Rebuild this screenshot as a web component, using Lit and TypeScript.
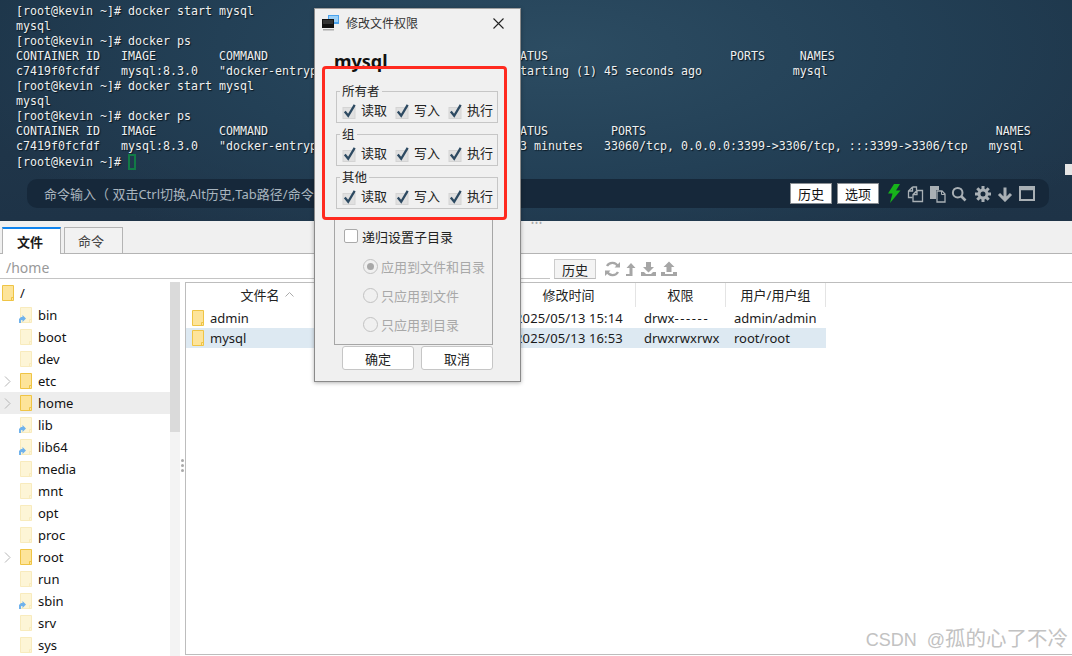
import { LitElement, html, css, svg } from "lit";
import { customElement } from "lit/decorators.js";

type Seg = [number, string];
const row = (segs: Seg[]) => {
  let s = "";
  for (const [col, t] of segs) s = s.padEnd(col, " ") + t;
  return s;
};
const PROMPT = "[root@kevin ~]# ";
const TERM: string[] = [
  PROMPT + "docker start mysql",
  "mysql",
  PROMPT + "docker ps",
  row([[0, "CONTAINER ID"], [15, "IMAGE"], [29, "COMMAND"], [70, "STATUS"], [102, "PORTS"], [112, "NAMES"]]),
  row([[0, "c7419f0fcfdf"], [15, "mysql:8.3.0"], [29, '"docker-entrypoint.s…"'], [69, "Restarting (1) 45 seconds ago"], [111, "mysql"]]),
  PROMPT + "docker start mysql",
  "mysql",
  PROMPT + "docker ps",
  row([[0, "CONTAINER ID"], [15, "IMAGE"], [29, "COMMAND"], [70, "STATUS"], [85, "PORTS"], [140, "NAMES"]]),
  row([[0, "c7419f0fcfdf"], [15, "mysql:8.3.0"], [29, '"docker-entrypoint.s…"'], [69, "Up 3 minutes"], [84, "33060/tcp, 0.0.0.0:3399->3306/tcp, :::3399->3306/tcp"], [139, "mysql"]]),
];

type Node = { n: string; strong?: boolean; link?: boolean; arrow?: boolean; sel?: boolean };
const TREE: Node[] = [
  { n: "bin", link: true },
  { n: "boot" },
  { n: "dev" },
  { n: "etc", strong: true, arrow: true },
  { n: "home", strong: true, arrow: true, sel: true },
  { n: "lib", link: true },
  { n: "lib64", link: true },
  { n: "media" },
  { n: "mnt" },
  { n: "opt" },
  { n: "proc" },
  { n: "root", strong: true, arrow: true },
  { n: "run" },
  { n: "sbin", link: true },
  { n: "srv" },
  { n: "sys" },
];

const folder = (strong: boolean, link = false) => html`<svg class="folder" width="14" height="18" viewBox="0 0 14 18">
  <path d="M1.5 1.5h11v15h-11z" fill="${strong ? "#fde49a" : "#fdf5d6"}" stroke="${strong ? "#efc445" : "#f8ebbd"}"/>
  <path d="M10.5 16.5v-3h2" fill="none" stroke="${strong ? "#efc445" : "#f8ebbd"}"/>
  ${link ? svg`<path d="M0 17v-4l2-2h1.500v-2l3.500 3.500-3.500 3.500v-2h-1l-.5 .5v2.500z" fill="#6fb2ec"/>` : ""}
</svg>`;

const check = html`<svg class="cb" width="14" height="16" viewBox="0 0 14 16">
  <rect x="1" y="3.500" width="12" height="11" fill="#e0e0e0" stroke="#d4d4d4"/>
  <path d="M2.800 7.500l3.400 4.300L12.700 .8" fill="none" stroke="#2d4a62" stroke-width="2.300"/>
</svg>`;

const PERMS = ["读取", "写入", "执行"];
const GROUPS = ["所有者", "组", "其他"];

@customElement("app-root")
export class AppRoot extends LitElement {
  static styles = css`
    :host {
      display: flex;
      flex-direction: column;
      position: relative;
      width: 1072px;
      height: 656px;
      overflow: hidden;
      background: #fff;
      font-family: "Noto Sans", "Noto Sans CJK SC", sans-serif;
      font-size: 13px;
      color: #1a1a1a;
    }
    svg { display: block; flex: none; }

    /* terminal */
    .term {
      height: 221px;
      flex: none;
      position: relative;
      background:
        radial-gradient(ellipse 620px 230px at 560px 50px, #2c4c62 0%, #234056 55%, rgba(30, 52, 72, 0) 100%),
        linear-gradient(180deg, #1d3549 0%, #1f3549 70%, #1e3347 100%);
      display: flex;
      flex-direction: column;
      padding: 4px 0 0 16px;
      box-sizing: border-box;
    }
    .lines {
      font-family: "DejaVu Sans Mono", monospace;
      font-size: 11.63px;
      line-height: 15px;
      color: #eef0f0;
      white-space: pre;
      text-shadow: 1px 1px 1px #0a1620;
    }
    .cursor {
      display: inline-block;
      width: 8px;
      height: 16px;
      border: 2px solid #127a46;
      box-sizing: border-box;
      vertical-align: -4px;
    }
    .cmdbar {
      position: absolute;
      left: 27px;
      top: 179px;
      width: 1022px;
      height: 29px;
      border-radius: 10px;
      background: #16283a;
      display: flex;
      align-items: center;
      padding-left: 17px;
      box-sizing: border-box;
      color: #a9b5bf;
      font-size: 13px;
    }
    .cmdtext { flex: 1; white-space: pre; }
    .cmdbtn {
      width: 42px;
      height: 21px;
      background: #fff;
      border: 1px solid #b5b5b5;
      outline: 1px solid #8a8f94;
      outline-offset: -1px;
      display: flex;
      align-items: center;
      justify-content: center;
      box-sizing: border-box;
      color: #111;
      margin-right: 5px;
    }
    .tools { display: flex; align-items: center; margin-left: 3px; margin-right: 14px; gap: 5px; }
    .sb {
      position: absolute;
      right: 0;
      top: 164px;
      width: 7px;
      height: 11px;
      background: #e6e6e6;
    }

    /* tabs */
    .tabs {
      height: 33px;
      flex: none;
      background: #f0f0f0;
      display: flex;
      align-items: flex-end;
      padding-left: 2px;
      gap: 3px;
      box-sizing: border-box;
      border-bottom: 1px solid #b4b4b4;
      position: relative;
    }
    .tab {
      width: 59px;
      height: 26px;
      display: flex;
      align-items: center;
      justify-content: center;
      border: 1px solid #b4b4b4;
      border-bottom: none;
      box-sizing: border-box;
      padding-right: 5px;
      font-size: 13px;
      color: #444;
      background: #f2f2f2;
    }
    .tab.on {
      height: 27px;
      background: #fff;
      font-weight: 700;
      color: #1a1a1a;
      border-top: 2px solid #0f84ee;
      margin-bottom: -1px;
      padding-right: 3px;
    }
    .dots {
      position: absolute;
      left: 531px;
      top: 0;
      color: #aaa;
      font-size: 8px;
      line-height: 4px;
      letter-spacing: 1px;
    }

    /* path row */
    .pathrow {
      height: 28px;
      flex: none;
      display: flex;
      align-items: flex-start;
      box-sizing: border-box;
    }
    .path {
      width: 550px;
      height: 25px;
      box-sizing: border-box;
      border-bottom: 1px solid #c4c4c4;
      padding: 3px 0 0 6px;
      font-size: 14px;
      color: #999;
      line-height: 21px;
    }
    .hist {
      margin: 5px 0 0 4px;
      width: 42px;
      height: 20px;
      border: 1px solid #ccc;
      border-bottom-color: #bbb;
      box-sizing: border-box;
      background: #f4f4f4;
      display: flex;
      align-items: center;
      justify-content: center;
      color: #222;
    }
    .ptools { display: flex; align-items: center; gap: 5px; margin: 5px 0 0 8px; height: 20px; }

    /* body */
    .body { flex: 1; display: flex; min-height: 0; }
    .tree { width: 170px; flex: none; display: flex; flex-direction: column; }
    .tr {
      height: 22px;
      flex: none;
      display: flex;
      align-items: center;
      padding-left: 20px;
      box-sizing: border-box;
      position: relative;
      font-size: 13px;
      color: #111;
    }
    .tr.root { padding-left: 2px; }
    .tr.sel { background: #ededed; }
    .tr .folder { margin-right: 5px; margin-left: -1px; }
    .chev { position: absolute; left: 4px; top: 6px; }
    .scroll { width: 10px; flex: none; background: #f3f3f3; }
    .thumb { height: 150px; background: #dadada; }
    .grip {
      width: 5px;
      flex: none;
      display: flex;
      flex-direction: column;
      justify-content: center;
      gap: 2px;
      align-items: center;
      padding-bottom: 8px;
      box-sizing: border-box;
    }
    .grip i { width: 3px; height: 3px; background: #aaa; border-radius: 50%; display: block; }
    .list {
      flex: 1;
      border: 1px solid #bdbdbd;
      border-right: none;
      display: flex;
      flex-direction: column;
      margin-bottom: 1px;
    }
    .hd, .rw {
      display: grid;
      grid-template-columns: 163px 158px 129px 90px 100px;
      width: 640px;
    }
    .hd { height: 24px; align-items: stretch; }
    .hd div {
      display: flex;
      align-items: center;
      justify-content: center;
      border-right: 1px solid #e4e4e4;
      color: #222;
      gap: 5px;
      padding-bottom: 2px;
      box-sizing: border-box;
    }
    .hd .dt { padding-right: 5px; }
    .rowsp { height: 1px; }
    .rw { height: 20px; align-items: center; color: #1a1a1a; font-size: 13px; }
    .rw.sel { background: #dde9f2; }
    .rw > div { padding-left: 8px; white-space: nowrap; display: flex; align-items: center; }
    .rw .nm { padding-left: 5px; gap: 5px; }
    .rw .date { letter-spacing: 0.13px; }
    .dash { letter-spacing: 1.6px; }

    /* dialog */
    .dlg {
      position: absolute;
      left: 314px;
      top: 8px;
      width: 207px;
      height: 374px;
      box-sizing: border-box;
      background: #f0f0f0;
      border: 1px solid #8a8a8a;
      border-top-color: #a0a0a0;
      box-shadow: 0 1px 4px rgba(0, 0, 0, 0.3);
      display: flex;
      flex-direction: column;
    }
    .dtitle {
      height: 26px;
      flex: none;
      display: flex;
      align-items: center;
      padding: 0 16px 0 7px;
      margin-top: 1px;
      font-size: 12px;
      color: #333;
      gap: 7px;
    }
    .dtitle span { flex: 1; }
    .fname {
      font-size: 18px;
      font-weight: 700;
      line-height: 24px;
      color: #111;
      margin: 13px 0 0 19px;
      height: 24px;
    }
    .groups { display: flex; flex-direction: column; gap: 11px; margin: 18px 0 0 21px; width: 162px; }
    .grp {
      height: 32px;
      box-sizing: border-box;
      border: 1px solid #c6c6c6;
      position: relative;
      display: flex;
      align-items: center;
      padding: 5px 0 0 5px;
    }
    .glabel {
      position: absolute;
      left: 3px;
      top: -8px;
      padding: 0 2px;
      background: #f0f0f0;
      font-size: 12.5px;
      line-height: 15px;
      color: #222;
    }
    .perm { width: 53px; display: flex; align-items: center; gap: 5px; font-size: 13px; color: #222; flex: none; line-height: 16px; }
    .perm .cb { margin-top: 4px; }
    .rec {
      margin: 10px 0 0 19px;
      width: 159px;
      height: 126px;
      box-sizing: border-box;
      border: 1px solid #a6a6a6;
      display: flex;
      flex-direction: column;
      padding: 7px 0 0 9px;
      flex: none;
    }
    .recc { display: flex; align-items: center; gap: 4px; color: #222; height: 18px; margin-bottom: 6.5px; }
    .box { width: 14px; height: 14px; background: #fff; border: 1px solid #aaa; border-radius: 2px; box-sizing: border-box; }
    .rad {
      display: flex;
      align-items: center;
      gap: 3px;
      color: #a8a8a8;
      height: 29px;
      margin-left: 19px;
      white-space: nowrap;
    }
    .circ {
      width: 15px;
      height: 15px;
      border-radius: 50%;
      border: 1px solid #c2c2c2;
      box-sizing: border-box;
      display: flex;
      align-items: center;
      justify-content: center;
      flex: none;
    }
    .circ i { width: 7px; height: 7px; border-radius: 50%; background: #a8a8a8; display: block; }
    .dbtns { display: flex; gap: 7px; margin: 1px 0 0 27px; }
    .dbtn {
      width: 72px;
      height: 24px;
      box-sizing: border-box;
      background: #fff;
      border: 1px solid #c6c6c6;
      border-radius: 3px;
      display: flex;
      align-items: center;
      justify-content: center;
      color: #222;
    }

    .mark {
      position: absolute;
      left: 322px;
      top: 66px;
      width: 185px;
      height: 154px;
      box-sizing: border-box;
      border: 3px solid #ff2a1f;
      border-radius: 4px;
    }
    .wm {
      position: absolute;
      right: 4px;
      bottom: 5px;
      display: flex;
      align-items: baseline;
      font-size: 18px;
      line-height: 22px;
      color: #c2c2c2;
      text-shadow: 0 0 1px #fff;
      font-family: "Liberation Sans", "Noto Sans CJK SC", sans-serif;
      white-space: pre;
      word-spacing: 5px;
    }
    .wm b { font-weight: 400; font-size: 20.5px; }
  `;

  private toolIcons() {
    const c = "#a9b0b5";
    return html`
      <svg width="14" height="21" viewBox="0 0 14 21"><path d="M7 1h6L9 7.500h4.500L3 20l2.500-9.500H1z" fill="#17b31a"/></svg>
      <svg width="18" height="18" viewBox="0 0 18 18"><path d="M6.500 2h4v3M6.500 2L2.500 6v6.500h4M6.500 2v4h-4" fill="none" stroke="${c}" stroke-width="1.300"/><path d="M11 5.500h5.500v11H7v-7zM11 5.500v4H7" fill="none" stroke="${c}" stroke-width="1.300"/></svg>
      <svg width="17" height="18" viewBox="0 0 17 18"><path d="M1 1h9v4H7v9H1z" fill="${c}"/><path d="M8 6h5l3 3v8H8z" fill="none" stroke="${c}" stroke-width="1.300"/><path d="M12.500 6v3.500H16" fill="none" stroke="${c}"/></svg>
      <svg width="16" height="16" viewBox="0 0 16 16"><circle cx="6.700" cy="6.700" r="4.800" fill="none" stroke="${c}" stroke-width="2"/><path d="M10 10l4.500 4.500" stroke="${c}" stroke-width="2.600"/></svg>
      <svg width="16" height="16" viewBox="0 0 16 16" style="margin-left:3px"><circle cx="8" cy="8" r="4" fill="none" stroke="${c}" stroke-width="3"/><path d="M8 0v3M8 13v3M0 8h3M13 8h3M2.300 2.300l2.100 2.100M11.600 11.600l2.100 2.100M13.700 2.300l-2.100 2.100M4.400 11.600l-2.100 2.100" stroke="${c}" stroke-width="3"/></svg>
      <svg width="16" height="16" viewBox="0 0 16 16" style="margin-left:1px"><path d="M8 1.500v12M2 8l6 6 6-6" fill="none" stroke="${c}" stroke-width="3"/></svg>
      <svg width="16" height="15" viewBox="0 0 16 15" style="margin-left:1px"><path d="M1 1h14v13H1z" fill="none" stroke="${c}" stroke-width="2"/><path d="M1 2.500h14" stroke="${c}" stroke-width="3.500"/></svg>
    `;
  }

  private pathIcons() {
    const c = "#a6a6a6";
    return html`
      <svg width="17" height="16" viewBox="0 0 17 16"><path d="M14 5.500A6.200 6.200 0 0 0 3 5M3 10.500A6.200 6.200 0 0 0 14 11" fill="none" stroke="${c}" stroke-width="2.400"/><path d="M10.500 6.500h5.500V1zM6.500 9.500H1V15z" fill="${c}"/></svg>
      <svg width="10" height="16" viewBox="0 0 10 16"><path d="M5 2L.500 7H3.500v6H0v2h6.500V7h3z" fill="${c}"/></svg>
      <svg width="15" height="16" viewBox="0 0 15 16"><path d="M5 1h5v5h3L7.500 11.500 2 6h3z" fill="${c}"/><path d="M0 11h3l2 2h5l2-2h3v4H0z" fill="${c}"/></svg>
      <svg width="16" height="16" viewBox="0 0 16 16"><path d="M5.500 11V6h-3l5.500-5.500L13.500 6h-3v5z" fill="${c}"/><path d="M0 11h4v2h8v-2h4v4H0z" fill="${c}"/></svg>
    `;
  }

  render() {
    return html`
      <section class="term">
        <div class="lines">${TERM.map((l) => html`<div>${l}</div>`)}<div>${PROMPT}<span class="cursor"></span></div></div>
        <div class="cmdbar">
          <span class="cmdtext">命令输入（ 双击Ctrl切换,Alt历史,Tab路径/命令提示 ）</span>
          <span class="cmdbtn">历史</span>
          <span class="cmdbtn">选项</span>
          <span class="tools">${this.toolIcons()}</span>
        </div>
        <div class="sb"></div>
      </section>

      <div class="tabs">
        <div class="tab on">文件</div>
        <div class="tab">命令</div>
        <div class="dots">•••</div>
      </div>

      <div class="pathrow">
        <div class="path">/home</div>
        <div class="hist">历史</div>
        <div class="ptools">${this.pathIcons()}</div>
      </div>

      <div class="body">
        <div class="tree">
          <div class="tr root">${folder(true)}/</div>
          ${TREE.map(
            (t) => html`<div class="tr ${t.sel ? "sel" : ""}">
              ${t.arrow
                ? html`<svg class="chev" width="7" height="11" viewBox="0 0 7 11"><path d="M1 .500l5 5-5 5" fill="none" stroke="#b5b5b5"/></svg>`
                : ""}
              ${folder(!!t.strong, !!t.link)}${t.n}
            </div>`
          )}
        </div>
        <div class="scroll"><div class="thumb"></div></div>
        <div class="grip"><i></i><i></i><i></i></div>
        <div class="list">
          <div class="hd">
            <div>文件名<svg width="9" height="6" viewBox="0 0 9 6"><path d="M.500 5.500l4-4 4 4" fill="none" stroke="#aaa"/></svg></div>
            <div></div>
            <div class="dt">修改时间</div>
            <div>权限</div>
            <div>用户/用户组</div>
          </div>
          <div class="rowsp"></div>
          <div class="rw">
            <div class="nm">${folder(true)}admin</div><div></div>
            <div class="date">2025/05/13 15:14</div><div>drwx<span class="dash">------</span></div><div>admin/admin</div>
          </div>
          <div class="rw sel">
            <div class="nm">${folder(true)}mysql</div><div></div>
            <div class="date">2025/05/13 16:53</div><div>drwxrwxrwx</div><div>root/root</div>
          </div>
        </div>
      </div>

      <div class="dlg">
        <div class="dtitle">
          <svg width="17" height="16" viewBox="0 0 17 16">
            <rect x="6" y="0" width="11" height="9" fill="#4aa3ee"/><rect x="7" y="1" width="9" height="6" fill="#9bd0f7"/>
            <rect x="0" y="4" width="12" height="9" fill="#111"/><rect x="1" y="5" width="10" height="4" fill="#333"/>
            <rect x="1" y="14" width="11" height="1.500" fill="#aaa"/>
          </svg>
          <span>修改文件权限</span>
          <svg width="11" height="11" viewBox="0 0 11 11"><path d="M.500 .500l10 10M10.500 .500l-10 10" stroke="#222" stroke-width="1.100"/></svg>
        </div>
        <div class="fname">mysql</div>
        <div class="groups">
          ${GROUPS.map(
            (g) => html`<div class="grp">
              <span class="glabel">${g}</span>
              ${PERMS.map((p) => html`<span class="perm">${check}${p}</span>`)}
            </div>`
          )}
        </div>
        <div class="rec">
          <div class="recc"><span class="box"></span>递归设置子目录</div>
          <div class="rad"><span class="circ"><i></i></span>应用到文件和目录</div>
          <div class="rad"><span class="circ"></span>只应用到文件</div>
          <div class="rad"><span class="circ"></span>只应用到目录</div>
        </div>
        <div class="dbtns"><div class="dbtn">确定</div><div class="dbtn">取消</div></div>
      </div>

      <div class="mark"></div>
      <div class="wm">CSDN @<b>孤的心了不冷</b></div>
    `;
  }
}
